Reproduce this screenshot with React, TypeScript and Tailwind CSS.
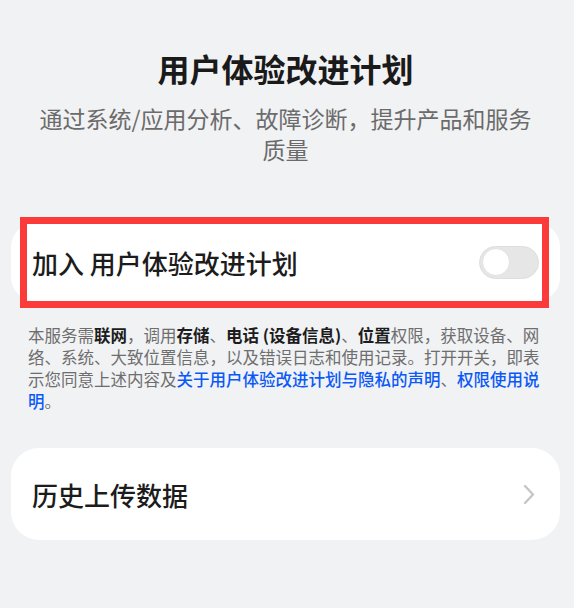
export default function App() {
  return (
    <div
      className="min-h-screen w-full bg-[#f1f2f4] pl-[11px] pr-[14px] pt-[46px]"
      style={{ fontFamily: '"Noto Sans CJK SC", "Noto Sans", sans-serif' }}
    >
      <h1 className="text-center text-[32px] leading-[44px] font-semibold text-[#1a1a1a]">
        用户体验改进计划
      </h1>
      <p className="mt-[13px] px-[24px] text-center text-[23px] leading-[31px] text-[#6b6b6b]">
        通过系统/应用分析、故障诊断，提升产品和服务质量
      </p>

      <div className="relative mt-[58px] flex h-[78px] items-center justify-between rounded-[24px] bg-white px-[21px]">
        <span className="text-[26px] font-medium text-[#1c1c1c]">加入 用户体验改进计划</span>
        <div className="flex h-[33px] w-[60px] items-center rounded-full border border-[#dedede] bg-[#e6e6e6] px-[2px]">
          <div className="size-[28px] rounded-full border border-[#e2e2e2] bg-white" />
        </div>
        <div className="pointer-events-none absolute left-[9px] top-[-6px] h-[91px] w-[529px] border-[7px] border-[#fb3a3a]" />
      </div>

      <p className="mt-[23px] px-[17px] text-[16.5px] leading-[22px] text-[#6e6e6e]">
        本服务需<b className="font-semibold text-[#1c1c1c]">联网</b>，调用
        <b className="font-semibold text-[#1c1c1c]">存储</b>、
        <b className="font-semibold text-[#1c1c1c]">电话 (设备信息)</b>、
        <b className="font-semibold text-[#1c1c1c]">位置</b>
        权限，获取设备、网络、系统、大致位置信息，以及错误日志和使用记录。打开开关，即表示您同意上述内容及
        <span className="font-medium text-[#0a59f7]">关于用户体验改进计划与隐私的声明</span>、
        <span className="font-medium text-[#0a59f7]">权限使用说明</span>。
      </p>

      <div className="mt-[36px] flex h-[92px] items-center justify-between rounded-[28px] bg-white pl-[21px] pr-[25px]">
        <span className="text-[26px] font-medium text-[#1c1c1c]">历史上传数据</span>
        <svg width="12" height="21" viewBox="0 0 12 21" fill="none">
          <path d="M2 2 L10 10.5 L2 19" stroke="#c6c6c6" strokeWidth="2.4" strokeLinecap="round" strokeLinejoin="round" />
        </svg>
      </div>
    </div>
  );
}
